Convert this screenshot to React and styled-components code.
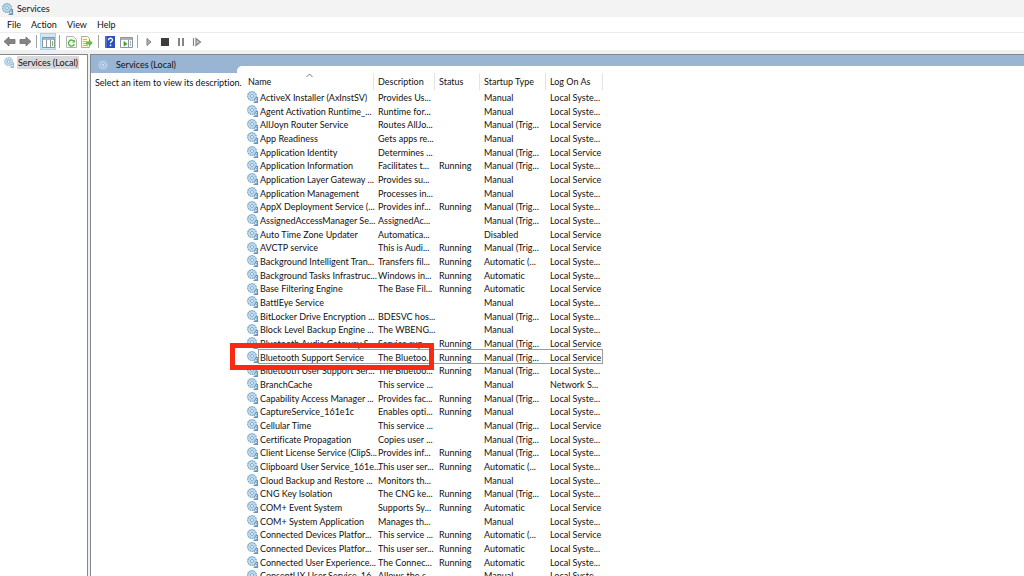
import React from "react";
import styled, { createGlobalStyle, css } from "styled-components";

const Global = createGlobalStyle`
  * { box-sizing: border-box; }
  html, body, #root { height: 100%; }
  body {
    margin: 0;
    overflow: hidden;
    background: #fff;
    color: #111;
    font: 9px/14px Lato, "Noto Sans", sans-serif;
    font-variant-ligatures: none;
  }
  button { font: inherit; font-variant-ligatures: none; color: inherit; border: 0; padding: 0; background: none; }
  svg { display: block; flex: none; }
`;

const Window = styled.div`
  display: flex;
  flex-direction: column;
  height: 100vh;
  overflow: hidden;
`;

const TitleBar = styled.header`
  display: flex;
  align-items: center;
  gap: 3px;
  height: 17px;
  flex: none;
  padding-left: 2px;
  background: #f3f3f3;
`;

const MenuBar = styled.nav`
  display: flex;
  align-items: center;
  gap: 10px;
  height: 15px;
  flex: none;
  padding-left: 7px;
`;

const ToolBar = styled.div`
  display: flex;
  align-items: center;
  height: 18px;
  flex: none;
  padding-left: 1px;
  border-top: 1px solid #ececec;
`;

const ToolButton = styled.button`
  display: flex;
  align-items: center;
  justify-content: center;
  width: 16px;
  height: 17px;
  ${(p) => p.$active && css`
    background: #cce8fb;
    box-shadow: inset 0 0 0 1px #a5d4f5;
  `}
`;

const Separator = styled.span`
  width: 1px;
  height: 13px;
  margin: 0 3px;
  background: #a4a4a4;
`;

const Workspace = styled.main`
  display: flex;
  flex: 1;
  min-height: 0;
  gap: 2px;
  padding-top: 4px;
  background: #f0f0f0;
`;

const Tree = styled.aside`
  width: 88px;
  flex: none;
  background: #fff;
  border: solid #828790;
  border-width: 1px 1px 0 0;
`;

const TreeItem = styled.button`
  display: flex;
  align-items: center;
  gap: 2px;
  height: 14px;
  padding-left: 4px;
  white-space: nowrap;
`;

const TreeLabel = styled.span`
  padding: 0 1px;
  line-height: 13px;
  background: #d9d9d9;
`;

const Content = styled.section`
  display: flex;
  flex-direction: column;
  flex: 1;
  min-width: 0;
  background: #9ab4d3;
  border: solid #828790;
  border-width: 1px 0 0 1px;
`;

const Banner = styled.div`
  display: grid;
  grid-template-columns: 146px 1fr;
  height: 18px;
  flex: none;
`;

const BannerTitle = styled.div`
  display: flex;
  align-items: center;
  gap: 7px;
  padding: 1px 0 0 6px;
`;

const BannerShelf = styled.div`
  align-self: end;
  height: 7px;
  background: #fff;
  border-top-left-radius: 5px;
`;

const Body = styled.div`
  display: grid;
  grid-template-columns: 153px 1fr;
  flex: 1;
  min-height: 0;
  background: #fff;
`;

const Hint = styled.p`
  margin: 0;
  padding: 3px 0 0 4px;
  white-space: nowrap;
`;

const ServiceTable = styled.table`
  table-layout: fixed;
  width: 359px;
  border-collapse: separate;
  border-spacing: 0;
  white-space: nowrap;
`;

const Column = styled.col`
  width: ${(p) => p.$width}px;
`;

const HeadCell = styled.th`
  position: relative;
  height: 17px;
  padding: 0 0 0 4px;
  font-weight: 400;
  text-align: left;
  border-right: 1px solid #e4e4e4;
`;

const SortMark = styled.svg`
  position: absolute;
  top: 0;
  left: 62px;
`;

const Row = styled.tr`
  line-height: 13px;
  height: 14px;
  &:nth-child(3n) { height: 13px; }
`;

const Cell = styled.td`
  position: relative;
  padding: 0 0 0 4px;
`;

const NameCell = styled(Cell)`
  padding-left: 3px;
`;

const NameBox = styled.div`
  display: flex;
  align-items: center;
  gap: 1px;
`;

const FocusFrame = styled.div`
  position: absolute;
  top: -1px;
  left: 14px;
  width: 345px;
  height: 15px;
  border: 1px solid #9c9c9c;
  pointer-events: none;
`;

const Highlight = styled.div`
  position: absolute;
  z-index: 2;
  top: -7px;
  left: -14px;
  width: 204px;
  height: 27px;
  border: 5px solid #fb2814;
  pointer-events: none;
`;

const Gear = ({ size = 12, pale }) => (
  <svg width={size} height={size} viewBox="0 0 12 12" fill="none" aria-hidden="true">
    <circle cx="5" cy="5" r="4.200" stroke={pale ? "#a3c3dc" : "#7fabcb"} strokeWidth="1.500" strokeDasharray="1.900 .4" />
    <circle cx="5" cy="5" r="3.100" fill="#cfe8f7" stroke="#a9cde6" strokeWidth=".9" />
    <circle cx="5" cy="5" r="1.500" fill="#fff" stroke="#6f9ec2" strokeWidth=".9" />
    <path d="M8.500 6.500h2v5h-4" stroke={pale ? "#a9c3d8" : "#6f93b5"} strokeWidth="1.200" />
    <circle cx="8.800" cy="9.300" r="1.400" fill="#e4f3fb" stroke={pale ? "#91b4cf" : "#5f8bb0"} strokeWidth=".9" />
  </svg>
);

const PaleGear = () => (
  <svg width="12" height="12" viewBox="0 0 12 12" fill="none" aria-hidden="true">
    <circle cx="6" cy="6" r="4" stroke="#b3cde6" strokeWidth="1.600" strokeDasharray="1.800 .5" />
    <circle cx="6" cy="6" r="2.600" fill="#9dbbdb" stroke="#bcd5ec" />
    <circle cx="6" cy="6" r="1" fill="#d8e8f5" />
  </svg>
);

const Arrow = ({ flip }) => (
  <svg width="13" height="11" viewBox="0 0 13 11" aria-hidden="true">
    <path transform={flip ? "translate(13 0) scale(-1 1)" : undefined} d="M1 5.500 6 1v2.500h6v4H6V10Z" fill="#858585" stroke="#6c6c6c" strokeWidth=".8" />
  </svg>
);

const Panes = ({ right }) => (
  <svg width="13" height="12" viewBox="0 0 13 12" aria-hidden="true">
    <path d="M.5 1.500h12v10H.5z" fill="#fff" stroke="#8d969e" />
    <path d="M1 2h11v2H1z" fill="#a7b2bc" />
    <path d={right ? "M8.500 4v7" : "M4.500 4v7M8.500 4v7"} stroke="#8d969e" />
    <path d={right ? "M4 5.500 7 8 4 10Z" : "M10.500 5v5"} fill="#4aa33d" stroke="#4aa33d" strokeWidth=".8" />
    {right && <path d="M10.500 5v5" stroke="#a7b2bc" />}
  </svg>
);

const Refresh = () => (
  <svg width="11" height="12" viewBox="0 0 11 12" fill="none" aria-hidden="true">
    <path d="M.5.5h7l3 3v8H.5z" fill="#fafafa" stroke="#b3b3b3" />
    <path d="M8 5.500A3 3 0 1 0 8.300 8" stroke="#4fb83f" strokeWidth="1.400" />
    <path d="M8.800 3.600v3H6Z" fill="#4fb83f" />
  </svg>
);

const Export = () => (
  <svg width="12" height="12" viewBox="0 0 12 12" fill="none" aria-hidden="true">
    <path d="M.5.5h6l2 2v9h-8z" fill="#fdf8dc" stroke="#b5ad8f" />
    <path d="M2 3.500h4M2 5.500h3M2 7.500h3M2 9.500h5" stroke="#aaa28a" strokeWidth=".8" />
    <path d="M5 5.500h3V3.300L11.800 7 8 10.500V8.400H5Z" fill="#5fc146" />
  </svg>
);

const HelpIcon = () => (
  <svg width="10" height="12" viewBox="0 0 10 12" fill="none" aria-hidden="true">
    <path d="M0 0h10v12H0z" fill="#2d50b8" />
    <path d="M1 0v12" stroke="#6f8bdc" />
    <path d="M3.500 4.200C3.500 1.600 7.600 1.700 7.500 4c0 1.500-2 1.600-2 3.200" stroke="#fff" strokeWidth="1.300" />
    <circle cx="5.500" cy="9.300" r=".9" fill="#fff" />
  </svg>
);

const Media = ({ kind }) => (
  <svg width="10" height="10" viewBox="0 0 10 10" aria-hidden="true">
    {kind === "play" && <path d="M3 1.500 7 5 3 8.500Z" fill="#b5b5b5" stroke="#7d7d7d" />}
    {kind === "stop" && <path d="M1 1h8v8H1z" fill="#3c3c3c" />}
    {kind === "pause" && <path d="M3 1v8M7 1v8" stroke="#858585" strokeWidth="2" />}
    {kind === "restart" && <path d="M1.500 1v8M4 1.500 8.500 5 4 8.500Z" fill="#c5c5c5" stroke="#858585" strokeWidth="1.200" />}
  </svg>
);

const R = "Running";
const M = "Manual";
const T = "Manual (Trig...";
const A = "Automatic";
const AD = "Automatic (...";
const SYS = "Local Syste...";
const SVC = "Local Service";

const services = [
  ["ActiveX Installer (AxInstSV)", "Provides Us...", "", M, SYS],
  ["Agent Activation Runtime_...", "Runtime for...", "", M, SYS],
  ["AllJoyn Router Service", "Routes AllJo...", "", T, SVC],
  ["App Readiness", "Gets apps re...", "", M, SYS],
  ["Application Identity", "Determines ...", "", T, SVC],
  ["Application Information", "Facilitates t...", R, T, SYS],
  ["Application Layer Gateway ...", "Provides su...", "", M, SVC],
  ["Application Management", "Processes in...", "", M, SYS],
  ["AppX Deployment Service (...", "Provides inf...", R, T, SYS],
  ["AssignedAccessManager Se...", "AssignedAc...", "", T, SYS],
  ["Auto Time Zone Updater", "Automatica...", "", "Disabled", SVC],
  ["AVCTP service", "This is Audi...", R, T, SVC],
  ["Background Intelligent Tran...", "Transfers fil...", R, AD, SYS],
  ["Background Tasks Infrastruc...", "Windows in...", R, A, SYS],
  ["Base Filtering Engine", "The Base Fil...", R, A, SVC],
  ["BattlEye Service", "", "", M, SYS],
  ["BitLocker Drive Encryption ...", "BDESVC hos...", "", T, SYS],
  ["Block Level Backup Engine ...", "The WBENG...", "", M, SYS],
  ["Bluetooth Audio Gateway S...", "Service sup...", R, T, SVC],
  ["Bluetooth Support Service", "The Bluetoo...", R, T, SVC],
  ["Bluetooth User Support Ser...", "The Bluetoo...", R, T, SYS],
  ["BranchCache", "This service ...", "", M, "Network S..."],
  ["Capability Access Manager ...", "Provides fac...", R, T, SYS],
  ["CaptureService_161e1c", "Enables opti...", R, M, SYS],
  ["Cellular Time", "This service ...", "", T, SVC],
  ["Certificate Propagation", "Copies user ...", "", T, SYS],
  ["Client License Service (ClipS...", "Provides inf...", R, T, SYS],
  ["Clipboard User Service_161e...", "This user ser...", R, AD, SYS],
  ["Cloud Backup and Restore ...", "Monitors th...", "", M, SYS],
  ["CNG Key Isolation", "The CNG ke...", R, T, SYS],
  ["COM+ Event System", "Supports Sy...", R, A, SVC],
  ["COM+ System Application", "Manages th...", "", M, SYS],
  ["Connected Devices Platfor...", "This service ...", R, AD, SVC],
  ["Connected Devices Platfor...", "This user ser...", R, A, SYS],
  ["Connected User Experience...", "The Connec...", R, A, SYS],
  ["ConsentUX User Service_16...", "Allows the s...", "", M, SYS],
];

const columns = [
  ["Name", 130],
  ["Description", 61],
  ["Status", 45],
  ["Startup Type", 66],
  ["Log On As", 57],
];

export default function App() {
  return (
    <>
      <Global />
      <Window>
        <TitleBar><Gear size={12} />Services</TitleBar>
        <MenuBar>
          {["File", "Action", "View", "Help"].map((m) => <button key={m}>{m}</button>)}
        </MenuBar>
        <ToolBar>
          <ToolButton aria-label="Back"><Arrow /></ToolButton>
          <ToolButton aria-label="Forward"><Arrow flip /></ToolButton>
          <Separator />
          <ToolButton aria-label="Show tree" $active><Panes /></ToolButton>
          <Separator />
          <ToolButton aria-label="Refresh"><Refresh /></ToolButton>
          <ToolButton aria-label="Export list"><Export /></ToolButton>
          <Separator />
          <ToolButton aria-label="Help"><HelpIcon /></ToolButton>
          <ToolButton aria-label="Show action pane"><Panes right /></ToolButton>
          <Separator />
          <ToolButton aria-label="Start"><Media kind="play" /></ToolButton>
          <ToolButton aria-label="Stop"><Media kind="stop" /></ToolButton>
          <ToolButton aria-label="Pause"><Media kind="pause" /></ToolButton>
          <ToolButton aria-label="Restart"><Media kind="restart" /></ToolButton>
        </ToolBar>
        <Workspace>
          <Tree>
            <TreeItem><Gear size={11} pale /><TreeLabel>Services (Local)</TreeLabel></TreeItem>
          </Tree>
          <Content>
            <Banner>
              <BannerTitle><PaleGear />Services (Local)</BannerTitle>
              <BannerShelf />
            </Banner>
            <Body>
              <Hint>Select an item to view its description.</Hint>
              <div>
                <ServiceTable>
                  <colgroup>
                    {columns.map(([name, width]) => <Column key={name} $width={width} />)}
                  </colgroup>
                  <thead>
                    <tr>
                      {columns.map(([name], i) => (
                        <HeadCell key={name}>
                          {name}
                          {i === 0 && (
                            <SortMark width="7" height="5" viewBox="0 0 7 5" fill="none">
                              <path d="M.5 4 3.500 1l3 3" stroke="#777" />
                            </SortMark>
                          )}
                        </HeadCell>
                      ))}
                    </tr>
                  </thead>
                  <tbody>
                    {services.map(([name, ...rest], i) => (
                      <Row key={i}>
                        <NameCell>
                          <NameBox><Gear />{name}</NameBox>
                          {name === "Bluetooth Support Service" && (
                            <>
                              <FocusFrame />
                              <Highlight />
                            </>
                          )}
                        </NameCell>
                        {rest.map((text, j) => <Cell key={j}>{text}</Cell>)}
                      </Row>
                    ))}
                  </tbody>
                </ServiceTable>
              </div>
            </Body>
          </Content>
        </Workspace>
      </Window>
    </>
  );
}
